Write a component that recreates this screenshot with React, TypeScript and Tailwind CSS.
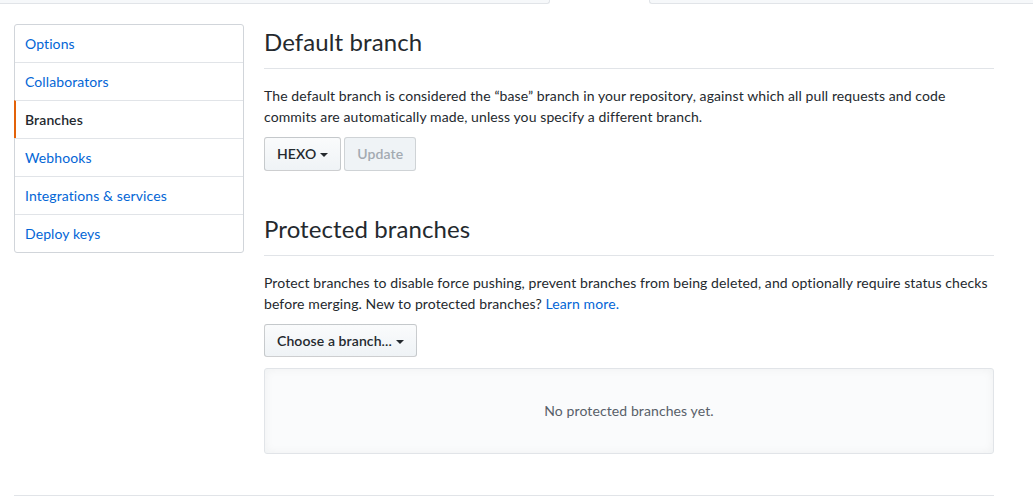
import React from "react";

const font = { fontFamily: "Lato, 'Liberation Sans', sans-serif" };

function Caret() {
  return <span className="ml-1 inline-block h-0 w-0 border-x-4 border-t-4 border-x-transparent border-t-[#24292e] align-middle" />;
}

export default function App() {
  const menu = ["Options", "Collaborators", "Branches", "Webhooks", "Integrations & services", "Deploy keys"];

  return (
    <div className="h-[497px] w-[1033px] overflow-hidden bg-white text-sm tracking-[0.1px] text-[#24292e]" style={font}>
      {/* tabs strip above */}
      <div className="flex h-1">
        <div className="w-[550px] rounded-br-[3px] border-b border-r border-[#e1e4e8] bg-[#f6f8fa]" />
        <div className="w-[99px]" />
        <div className="flex-1 rounded-bl-[3px] border-b border-l border-[#e1e4e8] bg-[#f6f8fa]" />
      </div>

      <div className="ml-[14px] mt-5 flex w-[980px] gap-5">
        <nav className="h-fit w-[230px] shrink-0 rounded-[3px] border border-[#d1d5da]">
          {menu.map((item, i) => {
            const active = item === "Branches";
            return (
              <div
                key={item}
                className={
                  "px-[10px] py-2 leading-[21px] " +
                  (i > 0 ? "border-t border-[#e1e4e8] " : "") +
                  (active
                    ? "-ml-px border-l-2 border-l-[#e36209] pl-[9px] font-semibold text-[#24292e]"
                    : "text-[#0366d6]")
                }
              >
                {item}
              </div>
            );
          })}
        </nav>

        <main className="w-[730px]">
          <div className="mb-4 border-b border-[#e1e4e8] pb-2">
            <h2 className="text-2xl font-normal leading-9">Default branch</h2>
          </div>
          <p className="mb-[10px] leading-[21px]">
            The default branch is considered the “base” branch in your repository, against which all pull requests and code commits are automatically made, unless you specify a different branch.
          </p>
          <div className="flex gap-[3px]">
            <button className="h-[34px] rounded-[3px] border border-[#1b1f2333] bg-gradient-to-b from-[#fafbfc] to-[#eff3f6] px-3 font-semibold">
              HEXO
              <Caret />
            </button>
            <button className="h-[34px] rounded-[3px] border border-[#1b1f2326] bg-[#eff3f6] px-3 font-semibold text-[#a3aab1]">
              Update
            </button>
          </div>

          <div className="mb-4 mt-10 border-b border-[#e1e4e8] pb-2">
            <h2 className="text-2xl font-normal leading-9">Protected branches</h2>
          </div>
          <p className="mb-[10px] leading-[21px]">
            Protect branches to disable force pushing, prevent branches from being deleted, and optionally require status checks before merging. New to protected branches?{" "}
            <a className="text-[#0366d6]">Learn more.</a>
          </p>
          <button className="h-[33px] rounded-[3px] border border-[#1b1f2333] bg-gradient-to-b from-[#fafbfc] to-[#eff3f6] px-3 font-semibold">
            Choose a branch...
            <Caret />
          </button>
          <div className="mt-[11px] flex h-[86px] items-center justify-center rounded-[3px] border border-[#e1e4e8] bg-[#fafbfc] text-[#586069] shadow-[inset_0_0_10px_rgba(27,31,35,0.05)]">
            No protected branches yet.
          </div>
        </main>
      </div>

      <div className="ml-[14px] mt-[41px] w-[980px] border-t border-[#e1e4e8]" />
    </div>
  );
}
